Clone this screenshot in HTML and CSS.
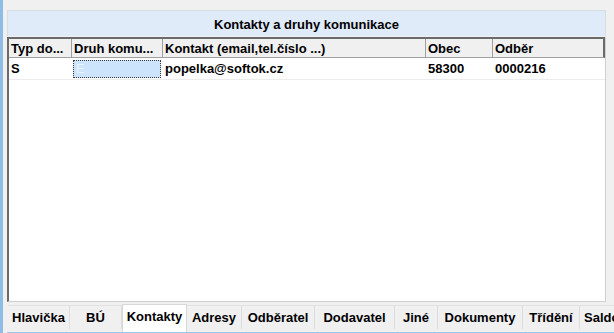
FILE: index.html
```html
<!DOCTYPE html>
<html lang="cs">
<head>
    <meta charset="UTF-8">
    <title>Kontakty a druhy komunikace</title>
    <link rel="stylesheet" href="styles.css">
</head>
<body>
    <div class="window">
        <div class="edge"></div>
        <div class="main">
            <div class="panel">
                <div class="title">Kontakty a druhy komunikace</div>
                <div class="grid">
                    <div class="row head">
                        <div class="cell c1">Typ do...</div>
                        <div class="cell c2">Druh komu...</div>
                        <div class="cell c3">Kontakt (email,tel.číslo ...)</div>
                        <div class="cell c4">Obec</div>
                        <div class="cell c5">Odběr</div>
                    </div>
                    <div class="row data">
                        <div class="cell c1">S</div>
                        <div class="cell c2"><span class="selected">E</span></div>
                        <div class="cell c3">popelka@softok.cz</div>
                        <div class="cell c4">58300</div>
                        <div class="cell c5">0000216</div>
                    </div>
                </div>
            </div>
            <div class="tabs">
                <div class="tab" style="width:62px">Hlavička</div>
                <div class="tab" style="width:52px">BÚ</div>
                <div class="tab active" style="width:65px">Kontakty</div>
                <div class="tab" style="width:55px">Adresy</div>
                <div class="tab" style="width:73px">Odběratel</div>
                <div class="tab" style="width:80px">Dodavatel</div>
                <div class="tab" style="width:43px">Jiné</div>
                <div class="tab" style="width:85px">Dokumenty</div>
                <div class="tab" style="width:57px">Třídění</div>
                <div class="tab last">Saldo</div>
            </div>
        </div>
    </div>
</body>
</html>
```

FILE: styles.css
```css
* {
    margin: 0;
    padding: 0;
    box-sizing: border-box;
}

body {
    width: 614px;
    height: 333px;
    overflow: hidden;
    background-color: #f0f0f0;
    font-family: 'Liberation Sans', Arial, sans-serif;
    font-size: 13px;
    font-weight: bold;
    color: #000000;
}

.window {
    display: flex;
    height: 333px;
}

/* blue frame strip on the left */
.edge {
    width: 3px;
    flex: none;
    background-color: #8fbce6;
}

.main {
    flex: 1;
    display: flex;
    flex-direction: column;
    padding: 10px 0 0 4px;
    overflow: hidden;
}

.panel {
    flex: 1;
    display: flex;
    flex-direction: column;
    margin-right: 8px;
}

.title {
    height: 26px;
    background-color: #e0ebfa;
    border: 1px solid #d8dde4;
    border-bottom: none;
    display: flex;
    align-items: center;
    justify-content: center;
    padding-top: 1px;
}

.grid {
    flex: 1;
    background-color: #ffffff;
    border-left: 2px solid #6a6a6a;
    border-right: 1px solid #d0d0d0;
    border-bottom: 1px solid #d0d0d0;
    margin-top: 1px;
}

.row {
    display: flex;
}

.head {
    height: 21px;
    background-color: #f0f0f0;
    border-top: 2px solid #6a6a6a;
    border-bottom: 1px solid #a0a0a0;
    border-right: 2px solid #6a6a6a;
}

.data {
    height: 22px;
    border-bottom: 1px solid #ececec;
}

.cell {
    display: flex;
    align-items: center;
    padding-left: 2px;
    white-space: nowrap;
    overflow: hidden;
}

.head .cell {
    border-right: 1px solid #a0a0a0;
}

.head .c5 {
    border-right: none;
}

.c1 { width: 63px; }
.c2 { width: 91px; }
.c3 { width: 263px; }
.c4 { width: 67px; }
.c5 { flex: 1; }

.data .c2 {
    padding: 1px 2px 1px 1px;
}

.selected {
    display: block;
    width: 88px;
    height: 18px;
    line-height: 16px;
    padding-left: 2px;
    background-color: #cce4fc;
    color: #eaf4ff;
    font-weight: normal;
    border: 1px dotted #3c3c3c;
}

.tabs {
    height: 31px;
    display: flex;
    align-items: flex-end;
    padding-left: 1px;
    padding-bottom: 3px;
    border-bottom: 1px solid #9ec8ea;
    flex: none;
}

.tab {
    height: 24px;
    flex: none;
    display: flex;
    align-items: center;
    justify-content: center;
    background-color: #f0f0f0;
    border-top: 1px solid #e2e2e2;
    border-right: 1px solid #dcdcdc;
    white-space: nowrap;
    overflow: hidden;
}

.tab.last {
    flex: 1;
    min-width: 0;
    justify-content: flex-start;
    padding-left: 4px;
    border-right: none;
}

.tab.active {
    height: 28px;
    background-color: #ffffff;
    border: 1px solid #d8d8d8;
    border-bottom: none;
    align-items: flex-start;
    padding-top: 4px;
    margin-bottom: -3px;
}
```
